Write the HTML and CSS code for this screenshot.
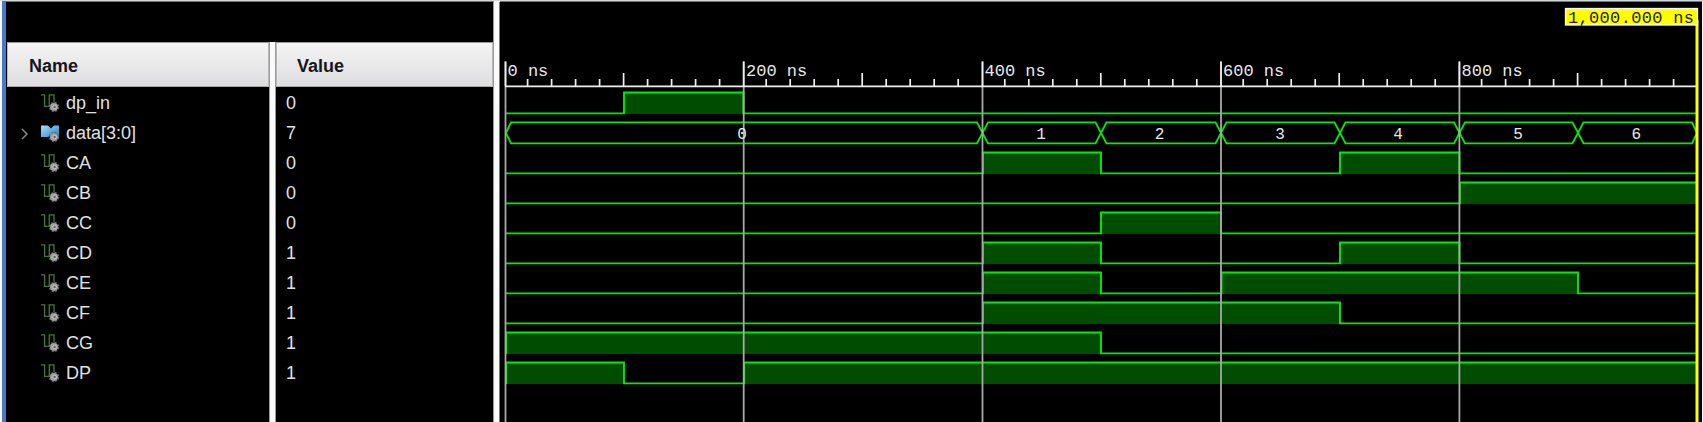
FILE: index.html
```html
<!DOCTYPE html>
<html lang="en">
<head>
<meta charset="utf-8">
<title>Waveform</title>
<link rel="stylesheet" href="styles.css">
</head>
<body>
<svg class="defs" aria-hidden="true">
  <defs>
    <linearGradient id="busFill" x1="0" y1="0" x2="1" y2="1"><stop offset="0" stop-color="#a9ddf7"/><stop offset=".5" stop-color="#5fb0e3"/><stop offset="1" stop-color="#2479b5"/></linearGradient>
    <g id="gear">
      <circle cx="13" cy="13" r="4.2" fill="#777" stroke="#666" stroke-width="2" stroke-dasharray="2 1.3"/>
      <circle cx="13" cy="13" r="3.8" fill="#a2a2a2"/>
      <circle cx="13.6" cy="13" r="1.7" fill="#555" stroke="#ccc" stroke-width="1"/>
    </g>
    <symbol id="wire" viewBox="0 0 19 19"><path d="M0 .8H3.6V12.3H8.3V.8H13V8" fill="none" stroke="#467a32" stroke-width="1.3"/><use href="#gear"/></symbol>
    <symbol id="bus" viewBox="0 0 19 19"><path d="M0 1.5H7L10 4.5L13 1.5H18V14H13L10 11L7 13H0Z" fill="url(#busFill)"/><use href="#gear"/></symbol>
    <path id="ticks" d="M22.2 79V86M46.2 79V86M70.2 79V86M94.2 79V86M118.2 73V86M142.2 79V86M166.2 79V86M190.2 79V86M214.2 79V86"/>
  </defs>
</svg>
<main class="viewer">
  <section class="signals">
    <div class="spacer"></div>
    <div class="columns">
      <div class="col names">
        <div class="head">Name</div>
        <div class="row"><svg class="icon"><use href="#wire"/></svg>dp_in</div>
        <div class="row"><svg class="chevron" viewBox="0 0 8 12"><path d="M1 1L6 6L1 11"/></svg><svg class="icon"><use href="#bus"/></svg>data[3:0]</div>
        <div class="row"><svg class="icon"><use href="#wire"/></svg>CA</div>
        <div class="row"><svg class="icon"><use href="#wire"/></svg>CB</div>
        <div class="row"><svg class="icon"><use href="#wire"/></svg>CC</div>
        <div class="row"><svg class="icon"><use href="#wire"/></svg>CD</div>
        <div class="row"><svg class="icon"><use href="#wire"/></svg>CE</div>
        <div class="row"><svg class="icon"><use href="#wire"/></svg>CF</div>
        <div class="row"><svg class="icon"><use href="#wire"/></svg>CG</div>
        <div class="row"><svg class="icon"><use href="#wire"/></svg>DP</div>
      </div>
      <div class="col values">
        <div class="head">Value</div>
        <div class="row">0</div>
        <div class="row">7</div>
        <div class="row">0</div>
        <div class="row">0</div>
        <div class="row">0</div>
        <div class="row">1</div>
        <div class="row">1</div>
        <div class="row">1</div>
        <div class="row">1</div>
        <div class="row">1</div>
      </div>
    </div>
  </section>
  <svg class="wave" viewBox="500 2 1202 420">
    <g class="fill">
      <path d="M624 92.5H743.5V114H624Z"/>
      <path d="M982.5 152.5H1101V174H982.5ZM1340 152.5H1459.5V174H1340Z"/>
      <path d="M1459.5 182.5H1697V204H1459.5Z"/>
      <path d="M1101 212.5H1221V234H1101Z"/>
      <path d="M982.5 242.5H1101V264H982.5ZM1340 242.5H1459.5V264H1340Z"/>
      <path d="M982.5 272.5H1101V294H982.5ZM1221 272.5H1578V294H1221Z"/>
      <path d="M982.5 302.5H1340V324H982.5Z"/>
      <path d="M505.5 332.5H1101V354H505.5Z"/>
      <path d="M505.5 362.5H624V384H505.5ZM743.5 362.5H1697V384H743.5Z"/>
    </g>
    <g class="trace">
      <path d="M505.5 113.4H624V92.5H743.5V113.4H1697"/>
      <path d="M505.5 173.4H982.9V152.5H1101V173.4H1340V152.5H1459.5V173.4H1697"/>
      <path d="M505.5 203.4H1459.9V182.5H1697"/>
      <path d="M505.5 233.4H1101V212.5H1221V233.4H1697"/>
      <path d="M505.5 263.4H982.9V242.5H1101V263.4H1340V242.5H1459.5V263.4H1697"/>
      <path d="M505.5 293.4H982.9V272.5H1101V293.4H1221.5V272.5H1578V293.4H1697"/>
      <path d="M505.5 323.4H982.9V302.5H1340V323.4H1697"/>
      <path d="M506.2 354V332.5H1101V353.4H1697"/>
      <path d="M506.2 384V362.5H624V383.4H744.2V362.5H1697"/>
      <path d="M506 133L511 122.4H977L988 143.4H1095.5L1106.5 122.4H1215.5L1226.5 143.4H1334.5L1345.5 122.4H1454L1465 143.4H1572.5L1583.5 122.4H1692L1697 133"/>
      <path d="M506 133L511 143.4H977L988 122.4H1095.5L1106.5 143.4H1215.5L1226.5 122.4H1334.5L1345.5 143.4H1454L1465 122.4H1572.5L1583.5 143.4H1692L1697 133"/>
    </g>
    <path class="grid" d="M505.5 61.5V422M743.7 61.5V422M982.5 61.5V422M1221 61.5V422M1459.4 61.5V422"/>
    <g class="ruler">
      <path d="M505 86.4H1697M505.5 61.5V86M743.7 61.5V86M982.5 61.5V86M1221 61.5V86M1459.4 61.5V86"/>
      <use href="#ticks" x="505.4"/><use href="#ticks" x="744"/><use href="#ticks" x="982.6"/><use href="#ticks" x="1221"/><use href="#ticks" x="1459.4"/>
    </g>
    <g class="label">
      <text x="507.5" y="75.5">0 ns</text>
      <text x="746" y="75.5">200 ns</text>
      <text x="984.5" y="75.5">400 ns</text>
      <text x="1223" y="75.5">600 ns</text>
      <text x="1461.5" y="75.5">800 ns</text>
    </g>
    <g class="label digit">
      <text x="742" y="138.5">0</text><text x="1041" y="138.5">1</text><text x="1159.5" y="138.5">2</text><text x="1280" y="138.5">3</text><text x="1398" y="138.5">4</text><text x="1518" y="138.5">5</text><text x="1636.3" y="138.5">6</text>
    </g>
    <path class="cursor" d="M1697 20V422"/>
    <rect class="flag" x="1565.5" y="8.5" width="132" height="16.5"/>
    <text class="flag-text" x="1568" y="22.5" textLength="126">1,000.000 ns</text>
  </svg>
</main>
</body>
</html>
```
FILE: styles.css
```css
* { box-sizing: border-box; }
body { margin: 0; background: #fff; overflow: hidden; font: 18px/30px "Liberation Sans", Arial, sans-serif; color: #e4e4e4; }
.defs { position: absolute; width: 0; height: 0; }
.viewer { display: flex; width: 1703px; height: 422px; padding-left: 2px; border-top: 1px solid #d4d7da; background: #fafafa; }
.signals { width: 492px; padding-left: 1px; border-left: 4px solid #4779cc; border-top: 1px solid #777; border-right: 1px solid #999; background: #000; display: flex; flex-direction: column; }
.spacer { height: 40px; flex: none; }
.columns { display: flex; flex: 1; gap: 5px; background: linear-gradient(#fafafa, #fafafa) 263px 0 / 5px 100% no-repeat; }
.col { height: 100%; }
.names { width: 263px; border-right: 1px solid #999; }
.values { flex: 1; border-left: 1px solid #999; }
.head { height: 45px; padding: 2px 0 0 21px; margin-bottom: 1px; line-height: 43px; font-weight: bold; color: #15151d; background: linear-gradient(#f4f4f4, #dedee1); border: 1px solid #bbb; border-top: 1px solid #999; border-bottom-color: #aaa; }
.values .head { padding-left: 20px; }
.row { display: flex; align-items: center; height: 30px; padding-top: 1px; line-height: 31px; color: #e0e0e0; }
.names .row { padding-left: 34px; }
.values .row { padding-left: 10px; }
.icon { width: 19px; height: 19px; margin: 0 6px 1px 0; flex: none; }
.chevron { width: 8px; height: 12px; margin: 0 12px 0 -20px; fill: none; stroke: #888; stroke-width: 1.5; }
.wave { width: 1202px; height: 420px; margin: 1px 0 0 6px; flex: none; background: #000; box-shadow: 0 -1px #777, -1px 0 #777; }
.fill { fill: #004c00; }
.trace { fill: none; stroke: #00ec00; stroke-width: 1.9; }
.grid { stroke: #a8a8a8; stroke-width: 1.8; }
.ruler { fill: none; stroke: #eee; stroke-width: 1.7; }
.label { font: 17px "Liberation Mono", monospace; fill: #e8e8e8; }
.digit { font-size: 16px; text-anchor: middle; }
.cursor { stroke: #ff0; stroke-width: 3; }
.flag { fill: #ff0; stroke: #fff; stroke-width: 1.3; }
.flag-text { font: 17px "Liberation Mono", monospace; fill: #222200; }
```
